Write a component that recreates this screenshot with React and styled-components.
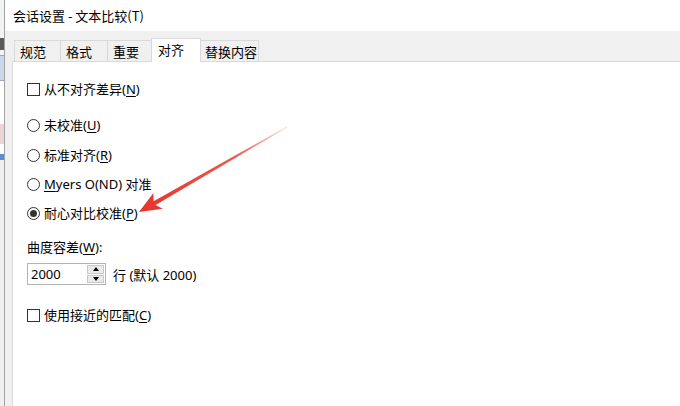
import React from 'react'
import styled, { createGlobalStyle } from 'styled-components'

const GlobalStyle = createGlobalStyle`
  html, body {
    margin: 0;
    padding: 0;
    background: #ffffff;
  }
  body {
    font-family: "Noto Sans", "Noto Sans CJK SC", sans-serif;
    font-size: 13px;
    color: #000;
  }
`

const Screen = styled.div`
  position: relative;
  display: flex;
  width: 680px;
  height: 406px;
  overflow: hidden;
`

// sliver of the window that sits behind the dialog
const BackWindow = styled.div`
  width: 4px;
  display: flex;
  flex-direction: column;
  background: #f3f3f3;
`

const BackBlock = styled.div`
  height: ${p => p.h}px;
  background: ${p => p.bg};
  border-bottom: ${p => (p.line ? '1px solid #9aa7b6' : 'none')};
`

const WindowEdge = styled.div`
  width: 1px;
  background: #a3a3a3;
`

const Dialog = styled.div`
  flex: 1;
  display: flex;
  flex-direction: column;
  background: #f0f0f0;
`

const TitleBar = styled.div`
  height: 31px;
  display: flex;
  align-items: center;
  padding: 0 8px;
  box-sizing: border-box;
  background: #ffffff;
  font-family: "Noto Sans CJK SC", sans-serif;
  font-size: 13px;
`

const Body = styled.div`
  flex: 1;
  display: flex;
  flex-direction: column;
  padding: 7px 0 0 7px;
`

const TabStrip = styled.div`
  display: flex;
  align-items: flex-end;
  height: 23px;
  padding-left: 2px;
  position: relative;
  z-index: 1;
`

const Tab = styled.div`
  width: ${p => p.w}px;
  height: 21px;
  box-sizing: border-box;
  padding: 2px 0 0 5px;
  display: flex;
  align-items: center;
  background: #f0f0f0;
  border: 1px solid #d9d9d9;
  border-bottom: none;
  border-right: ${p => (p.last ? '1px solid #d9d9d9' : 'none')};
  font-family: "Noto Sans CJK SC", sans-serif;
  line-height: 20px;
`

const ActiveTab = styled(Tab)`
  height: 24px;
  width: ${p => p.w + 4}px;
  margin: 0 -2px -1px -2px;
  padding: 0 0 2px 6px;
  background: #ffffff;
  border-right: 1px solid #d9d9d9;
  position: relative;
  z-index: 2;
`

const Panel = styled.div`
  flex: 1;
  display: flex;
  flex-direction: column;
  padding: 0 0 0 14px;
  background: #ffffff;
  border-top: 1px solid #d9d9d9;
  border-left: 1px solid #d9d9d9;
`

const Row = styled.div`
  display: flex;
  align-items: center;
  gap: 4px;
  height: 20px;
  margin-top: ${p => p.top}px;
  line-height: 20px;
  white-space: nowrap;
`

const Box = styled.span`
  width: 13px;
  height: 13px;
  box-sizing: border-box;
  border: 1px solid #333333;
  background: #ffffff;
`

const Radio = styled.span`
  width: 13px;
  height: 13px;
  box-sizing: border-box;
  border-radius: 50%;
  border: 1px solid #333333;
  background: #ffffff;
  display: flex;
  align-items: center;
  justify-content: center;

  &::after {
    content: '';
    width: 7px;
    height: 7px;
    border-radius: 50%;
    background: ${p => (p.checked ? '#333333' : 'transparent')};
  }
`

const Key = styled.span`
  text-decoration: underline;
  text-underline-offset: 2px;
`

const SpinRow = styled.div`
  display: flex;
  align-items: center;
  gap: 7px;
  margin-top: 6px;
`

const Spin = styled.div`
  width: 79px;
  height: 22px;
  box-sizing: border-box;
  display: flex;
  border: 1px solid #b4b4b4;
  background: #ffffff;
`

const SpinValue = styled.div`
  flex: 1;
  padding-left: 3px;
  line-height: 20px;
  font-size: 13px;
`

const SpinButtons = styled.div`
  width: 17px;
  display: flex;
  flex-direction: column;
  gap: 1px;
  padding: 1px 1px 1px 0;
`

const SpinButton = styled.div`
  flex: 1;
  display: flex;
  align-items: center;
  justify-content: center;
  background: #eaeaea;
  border: 1px solid #c8c8c8;

  &::after {
    content: '';
    border-left: 3px solid transparent;
    border-right: 3px solid transparent;
    ${p => (p.up ? 'border-bottom: 4px solid #000;' : 'border-top: 4px solid #000;')}
  }
`

const Arrow = styled.svg`
  position: absolute;
  left: 0;
  top: 0;
  pointer-events: none;
`

const tabs = [
  { label: '规范', w: 46 },
  { label: '格式', w: 47 },
  { label: '重要', w: 46 },
  { label: '对齐', w: 46, active: true },
  { label: '替换内容', w: 60, last: true },
]

export default function App() {
  return (
    <>
      <GlobalStyle />
      <Screen>
        <BackWindow>
          <BackBlock h={38} bg="#f3f3f3" />
          <BackBlock h={12} bg="#5a5a5a" />
          <BackBlock h={5} bg="#f3f3f3" line />
          <BackBlock h={24} bg="#c9d9ea" line />
          <BackBlock h={44} bg="#ffffff" />
          <BackBlock h={20} bg="#edd5d5" />
          <BackBlock h={10} bg="#ffffff" />
          <BackBlock h={6} bg="#5b8fd0" />
          <BackBlock h={247} bg="#efefef" />
        </BackWindow>
        <WindowEdge />
        <Dialog>
          <TitleBar>会话设置 - 文本比较(T)</TitleBar>
          <Body>
            <TabStrip>
              {tabs.map(t =>
                t.active ? (
                  <ActiveTab key={t.label} w={t.w}>{t.label}</ActiveTab>
                ) : (
                  <Tab key={t.label} w={t.w} last={t.last}>{t.label}</Tab>
                )
              )}
            </TabStrip>
            <Panel>
              <Row top={17}>
                <Box />
                <span>从不对齐差异(<Key>N</Key>)</span>
              </Row>
              <Row top={16}>
                <Radio />
                <span>未校准(<Key>U</Key>)</span>
              </Row>
              <Row top={10}>
                <Radio />
                <span>标准对齐(<Key>R</Key>)</span>
              </Row>
              <Row top={9}>
                <Radio />
                <span><Key>M</Key>yers O(ND) 对准</span>
              </Row>
              <Row top={9}>
                <Radio checked />
                <span>耐心对比校准(<Key>P</Key>)</span>
              </Row>
              <Row top={14}>
                <span>曲度容差(<Key>W</Key>):</span>
              </Row>
              <SpinRow>
                <Spin>
                  <SpinValue>2000</SpinValue>
                  <SpinButtons>
                    <SpinButton up />
                    <SpinButton />
                  </SpinButtons>
                </Spin>
                <span>行 (默认 2000)</span>
              </SpinRow>
              <Row top={20}>
                <Box />
                <span>使用接近的匹配(<Key>C</Key>)</span>
              </Row>
            </Panel>
          </Body>
        </Dialog>
        <Arrow width="680" height="406" viewBox="0 0 680 406">
          <defs>
            <linearGradient id="shaft" x1="287" y1="127" x2="139" y2="212" gradientUnits="userSpaceOnUse">
              <stop offset="0" stopColor="#ef3b33" stopOpacity="0.15" />
              <stop offset="0.35" stopColor="#ea3a30" stopOpacity="0.85" />
              <stop offset="1" stopColor="#e8322a" />
            </linearGradient>
          </defs>
          <polygon
            fill="url(#shaft)"
            points="286.8,126.6 153.6,201.3 153.4,193.0 139,212 162.8,208.8 155.6,204.9 287.2,127.4"
          />
        </Arrow>
      </Screen>
    </>
  )
}
